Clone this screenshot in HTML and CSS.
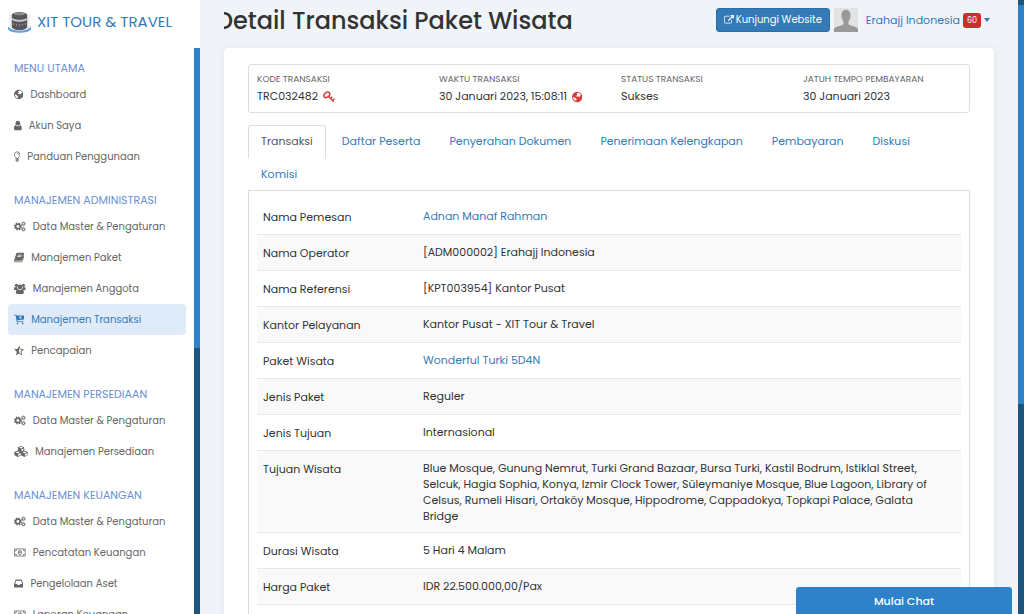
FILE: index.html
```html
<!DOCTYPE html>
<html lang="id">
<head>
<meta charset="utf-8">
<meta name="viewport" content="width=device-width, initial-scale=1">
<title>Detail Transaksi Paket Wisata</title>
<link rel="stylesheet" href="styles.css">
</head>
<body>
<svg class="sprite" aria-hidden="true">
  <symbol id="globe" viewBox="0 0 12 14"><path fill-rule="evenodd" d="M6 1a6 6 0 1 0 0 12A6 6 0 0 0 6 1zM5.500 2.600 7 2l2.300.8L10.600 4.600 9.200 5.600 8.600 7.400 6.800 6.200 5.600 6.800 4.800 5.600 6.200 4.600zM1.300 7 3.600 8 5.400 9.600 4.600 11.800 2.600 10.600 1.400 8.800z"/></symbol>
  <symbol id="user" viewBox="0 0 10 14"><circle cx="5" cy="4" r="3"/><path d="M2 6.500C.6 7 0 9 0 11c0 1.200.8 2 1.900 2h6.200c1.100 0 1.900-.8 1.900-2 0-2-.6-4-2-4.500a4.200 4.200 0 0 1-6 0z"/></symbol>
  <symbol id="bulb" viewBox="0 0 8 14"><path fill="none" stroke="currentColor" d="M2.500 9.500C2.500 7.500.5 7 .5 4.500a3.500 3.500 0 0 1 7 0c0 2.500-2 3-2 5zM4 3c1.200 0 1.700.5 1.700 1.500"/><path d="M2 10h4v1H2zm0 1.500h4v1H2zM3 13h2v1H3z"/></symbol>
  <symbol id="cogs" viewBox="0 0 15 14"><g fill="none" stroke="currentColor"><circle cx="5" cy="7" r="2.900" stroke-width="2"/><circle cx="5" cy="7" r="4.300" stroke-width="1.600" stroke-dasharray="1.900 1.480"/><circle cx="12" cy="3.500" r="1.500" stroke-width="1.200"/><circle cx="12" cy="3.500" r="2.400" stroke-dasharray="1.200 .68"/><circle cx="12" cy="10.500" r="1.500" stroke-width="1.200"/><circle cx="12" cy="10.500" r="2.400" stroke-dasharray="1.200 .68"/></g></symbol>
  <symbol id="book" viewBox="0 0 13 14"><path fill-rule="evenodd" d="M4.300 1h7.500c.9 0 1.300.7 1 1.600l-2.200 7.200c-.3.800-.9 1.200-1.700 1.200H2c-.8 0-1 .3-.8.700.2.300.5.400.9.400h7.200c.6 0 .9-.2 1.100-.7l2-6.500c.6.300.7.700.5 1.300l-2 6c-.2.500-.8.800-1.300.8H2C.9 13 0 12 0 11c0-.6.300-.9.500-1.600L2.900 2c.3-.7.800-1 1.400-1zM5 3.500l-.3 1h5l.3-1zm-.7 2-.3 1h5l.3-1z"/></symbol>
  <symbol id="group" viewBox="0 0 15 14"><circle cx="3" cy="3" r="2"/><circle cx="12" cy="3" r="2"/><circle cx="7.500" cy="5" r="3"/><path d="M1 5C.2 5 0 6.400 0 7.500S.6 9 1.300 9h2C4 8.200 5 8 5 8 4 7 3.800 5.800 4 5.200 3 5.500 2 5.500 1 5zm13 0c.8 0 1 1.400 1 2.500S14.400 9 13.700 9h-2c-.7-.8-1.700-1-1.700-1 1-1 1.200-2.200 1-2.800 1 .3 2 .3 3-.2zM5 8c-2 0-2.500 1.800-2.500 4 0 1.300.8 2 2 2h6c1.200 0 2-.7 2-2 0-2.200-.5-4-2.500-4a4 4 0 0 1-5 0z"/></symbol>
  <symbol id="cart" viewBox="0 0 13 14"><path fill-rule="evenodd" d="M0 1.500C0 1.200.2 1 .5 1h2c.6 0 .7.500.8 1h9.200c.3 0 .5.200.5.500v4c0 .3-.2.500-.5.500L4.300 8l.2 1H12v1H3.700c-.5 0-.6-.4-.4-.8L2.100 2H.5C.2 2 0 1.800 0 1.500zM8.500 2.500h-1v2H6L8 6.500l2-2H8.500z"/><circle cx="4.500" cy="12" r="1.100"/><circle cx="11" cy="12" r="1.100"/></symbol>
  <symbol id="star" viewBox="0 0 13 14"><path fill-rule="evenodd" d="M6.500 1 8.300 4.900l4.400.6-3.200 3 .8 4.400-3.800-2.100-3.800 2.100.8-4.400-3.200-3 4.400-.6zM6.500 3.500v6.200l2.400 1.300-.5-2.900 2-1.900-2.700-.4z"/></symbol>
  <symbol id="cubes" viewBox="0 0 18 14"><path fill-rule="evenodd" d="M9 0l4 1.600v4L17.600 7.600v4L13.300 14 9 11.800 4.700 14 .4 11.600v-4L5 5.600v-4zM9 1 6.400 2.200 9 3.300l2.600-1.100zM9.500 4.300v2.300L12 5.500V3.200zM4.700 7 2 8.100l2.700 1.200 2.700-1.200zm.6 3.200v2.500L8.400 11V8.900zM13.300 7l-2.700 1.100 2.700 1.200L16 8.100zm.6 3.200v2.500l2.900-1.700V8.900z"/></symbol>
  <symbol id="money" viewBox="0 0 15 14"><path fill="none" stroke="currentColor" d="M.5 2.500h14v9H.5zM3 3v1.500L1 5M12 3v1.500l2 .5M3 11V9.500L1 9m11 2V9.500l2-.5"/><path fill-rule="evenodd" d="M7.500 4C5.800 4 5 5.500 5 7s.8 3 2.500 3S10 8.500 10 7s-.8-3-2.500-3zM7 5h1v3h1v1H6V8h1V6.200L6.500 6z"/></symbol>
  <symbol id="inbox" viewBox="0 0 12 14"><path fill-rule="evenodd" d="M2.200 2h7.600L12 7.800V12H0V7.800zM3 3.400 1.500 7.500h2.400l.9 1.500h2.400l.9-1.500h2.400L9 3.400z"/></symbol>
  <symbol id="external" viewBox="0 0 1792 1792"><path d="M1408 928v320q0 119-84.500 203.500t-203.500 84.500h-832q-119 0-203.500-84.500t-84.500-203.500v-832q0-119 84.500-203.500t203.500-84.500h704q14 0 23 9t9 23v64q0 14-9 23t-23 9h-704q-66 0-113 47t-47 113v832q0 66 47 113t113 47h832q66 0 113-47t47-113v-320q0-14 9-23t23-9h64q14 0 23 9t9 23zm384-864v512q0 26-19 45t-45 19-45-19l-176-176-652 652q-10 10-23 10t-23-10l-114-114q-10-10-10-23t10-23l652-652-176-176q-19-19-19-45t19-45 45-19h512q26 0 45 19t19 45z"/></symbol>
  <symbol id="key" viewBox="0 0 14 14"><g fill="none" stroke="currentColor"><ellipse cx="4.500" cy="4.500" rx="3.700" ry="2.700" stroke-width="1.800" transform="rotate(-40 4.500 4.500)"/><path stroke-width="1.800" d="M6.500 6.500 12.500 12.500M8.800 8.800l1.900-1.900M11 11.200l2.200-2.200"/></g></symbol>
</svg>

<div class="app">
  <aside class="sidebar">
    <a class="brand" href="#">
      <svg class="logo" viewBox="0 0 24 24" aria-hidden="true">
        <path fill="#f1f0f1" d="M1 3h22v15H1z"/>
        <path fill="#56555a" d="M4 4c2-4 14-4 16 0v13c-2 4-14 4-16 0z"/>
        <path fill="#8e8c91" d="M6 3c2-2 10-2 12 0-2 2-10 2-12 0z"/>
        <path fill="#c9c7ca" d="M4 7c4 3 12 3 16 0v2c-4 3-12 3-16 0z"/>
        <path fill="none" stroke="#99969b" d="M6 12.500v2m3-1v2m3-2v2m3-2v2m3-3v2"/>
        <path fill="#67a5df" d="M0 16c4 6 20 6 24 0v3c-2 5-22 5-24 0z"/>
      </svg>
      <span>XIT TOUR &amp; TRAVEL</span>
    </a>
    <div class="sidebar-body">
      <nav class="menu">
        <section>
          <h2>MENU UTAMA</h2>
          <a href="#"><svg viewBox="0 0 12 14"><use href="#globe"/></svg>Dashboard</a>
          <a href="#"><svg viewBox="0 0 10 14"><use href="#user"/></svg>Akun Saya</a>
          <a href="#"><svg viewBox="0 0 8 14"><use href="#bulb"/></svg>Panduan Penggunaan</a>
        </section>
        <section>
          <h2>MANAJEMEN ADMINISTRASI</h2>
          <a href="#"><svg viewBox="0 0 15 14"><use href="#cogs"/></svg>Data Master &amp; Pengaturan</a>
          <a href="#"><svg viewBox="0 0 13 14"><use href="#book"/></svg>Manajemen Paket</a>
          <a href="#"><svg viewBox="0 0 15 14"><use href="#group"/></svg>Manajemen Anggota</a>
          <a class="active" href="#"><svg viewBox="0 0 13 14"><use href="#cart"/></svg>Manajemen Transaksi</a>
          <a href="#"><svg viewBox="0 0 13 14"><use href="#star"/></svg>Pencapaian</a>
        </section>
        <section>
          <h2>MANAJEMEN PERSEDIAAN</h2>
          <a href="#"><svg viewBox="0 0 15 14"><use href="#cogs"/></svg>Data Master &amp; Pengaturan</a>
          <a href="#"><svg viewBox="0 0 18 14"><use href="#cubes"/></svg>Manajemen Persediaan</a>
        </section>
        <section>
          <h2>MANAJEMEN KEUANGAN</h2>
          <a href="#"><svg viewBox="0 0 15 14"><use href="#cogs"/></svg>Data Master &amp; Pengaturan</a>
          <a href="#"><svg viewBox="0 0 15 14"><use href="#money"/></svg>Pencatatan Keuangan</a>
          <a href="#"><svg viewBox="0 0 12 14"><use href="#inbox"/></svg>Pengelolaan Aset</a>
          <a href="#"><svg viewBox="0 0 15 14"><use href="#money"/></svg>Laporan Keuangan</a>
        </section>
      </nav>
      <div class="track"><div class="thumb menu-thumb"></div></div>
    </div>
  </aside>

  <main class="main">
    <header class="topbar">
      <h1>Detail Transaksi Paket Wisata</h1>
      <div class="account">
        <a class="visit" href="#"><svg viewBox="0 0 1792 1792"><use href="#external"/></svg>Kunjungi Website</a>
        <svg class="avatar" viewBox="0 0 24 24" role="img" aria-label="Foto profil">
          <path fill="#e2e2e2" d="M0 0h24v24H0z"/>
          <path fill="#999" d="M7.500 7c0-7 9-7 9 0 0 3-.7 5-2 6.500V16c1 2 8.500 2 9.500 5v3H0v-3c1-3 8.500-3 9.500-5v-2.500C8.200 12 7.500 10 7.500 7z"/>
        </svg>
        <button class="profile" type="button">Erahajj Indonesia <span class="badge">60</span><span class="caret"></span></button>
      </div>
    </header>

    <div class="card">
      <dl class="summary">
        <div><dt>KODE TRANSAKSI</dt><dd>TRC032482 <svg viewBox="0 0 14 14"><use href="#key"/></svg></dd></div>
        <div><dt>WAKTU TRANSAKSI</dt><dd>30 Januari 2023, 15:08:11 <svg viewBox="0 0 12 14"><use href="#globe"/></svg></dd></div>
        <div><dt>STATUS TRANSAKSI</dt><dd>Sukses</dd></div>
        <div><dt>JATUH TEMPO PEMBAYARAN</dt><dd>30 Januari 2023</dd></div>
      </dl>

      <nav class="tabs">
        <a class="active" href="#">Transaksi</a>
        <a href="#">Daftar Peserta</a>
        <a href="#">Penyerahan Dokumen</a>
        <a href="#">Penerimaan Kelengkapan</a>
        <a href="#">Pembayaran</a>
        <a href="#">Diskusi</a>
        <a href="#">Komisi</a>
      </nav>

      <div class="panel">
        <table class="details">
          <tbody>
            <tr><th scope="row">Nama Pemesan</th><td><a href="#">Adnan Manaf Rahman</a></td></tr>
            <tr><th scope="row">Nama Operator</th><td>[ADM000002] Erahajj Indonesia</td></tr>
            <tr><th scope="row">Nama Referensi</th><td>[KPT003954] Kantor Pusat</td></tr>
            <tr><th scope="row">Kantor Pelayanan</th><td>Kantor Pusat - XIT Tour &amp; Travel</td></tr>
            <tr><th scope="row">Paket Wisata</th><td><a href="#">Wonderful Turki 5D4N</a></td></tr>
            <tr><th scope="row">Jenis Paket</th><td>Reguler</td></tr>
            <tr><th scope="row">Jenis Tujuan</th><td>Internasional</td></tr>
            <tr><th scope="row">Tujuan Wisata</th><td>Blue Mosque, Gunung Nemrut, Turki Grand Bazaar, Bursa Turki, Kastil Bodrum, Istiklal Street,<br>Selcuk, Hagia Sophia, Konya, Izmir Clock Tower, Süleymaniye Mosque, Blue Lagoon, Library of<br>Celsus, Rumeli Hisari, Ortaköy Mosque, Hippodrome, Cappadokya, Topkapi Palace, Galata<br>Bridge</td></tr>
            <tr><th scope="row">Durasi Wisata</th><td>5 Hari 4 Malam</td></tr>
            <tr><th scope="row">Harga Paket</th><td>IDR 22.500.000,00/Pax</td></tr>
            <tr><th scope="row">&nbsp;</th><td></td></tr>
          </tbody>
        </table>
      </div>
    </div>
  </main>
  <div class="track page-track"><div class="thumb page-thumb"></div></div>
</div>
<button class="chat" type="button">Mulai Chat</button>
</body>
</html>
```

FILE: styles.css
```css
* { box-sizing: border-box; }

body {
  margin: 0;
  height: 100vh;
  overflow: hidden;
  background: #f0f4f8;
  color: #333;
  font-family: Poppins, Inter, sans-serif;
  font-size: 11px;
  line-height: 16px;
}

a { color: #337ab7; text-decoration: none; }
button { font: inherit; }
svg { fill: currentColor; }
.sprite { position: absolute; width: 0; height: 0; }

.app { display: flex; height: 100vh; }

.sidebar {
  display: flex;
  flex-direction: column;
  flex: 0 0 200px;
  background: #fff;
}
.brand {
  display: flex;
  align-items: center;
  gap: 6px;
  flex: 0 0 48px;
  padding: 0 8px 4px;
  font-size: 15px;
  white-space: nowrap;
}
.logo { width: 23px; height: 23px; }
.sidebar-body { display: flex; flex: 1; min-height: 0; }
.menu {
  display: flex;
  flex-direction: column;
  gap: 17px;
  flex: 1;
  padding: 9px 8px 0;
  overflow: hidden;
}
.menu section { flex: none; }
.menu h2 {
  margin: 0;
  padding-left: 6px;
  color: #6a8fd4;
  font-size: 11px;
  font-weight: 400;
  line-height: 22px;
  white-space: nowrap;
}
.menu a {
  display: flex;
  align-items: center;
  gap: 7px;
  height: 31px;
  padding-left: 6px;
  border-radius: 4px;
  color: #666;
  font-size: 10px;
  white-space: nowrap;
}
.menu a svg { height: 11px; }
.menu a.active { background: #dfebf9; color: #337ab7; }

.track { flex: 0 0 6px; background: #1c567f; }
.thumb { background: #2d82ca; }
.menu-thumb { height: 53%; }
.page-track { padding-top: 5px; }
.page-thumb { height: 65.5%; }

.main { flex: 1; min-width: 0; padding: 0 24px; overflow: hidden; }
.topbar {
  display: flex;
  align-items: center;
  justify-content: space-between;
  height: 48px;
  padding-bottom: 8px;
}
h1 {
  margin: 0;
  overflow: hidden;
  font-size: 24px;
  font-weight: 500;
  line-height: 40px;
  padding-top: 2px;
  text-indent: -8px;
  white-space: nowrap;
}
.account { display: flex; align-items: center; gap: 4px; }
.visit {
  display: flex;
  align-items: center;
  gap: 2px;
  height: 24px;
  padding: 0 7px;
  border: 1px solid #2e6da4;
  border-radius: 3px;
  background: #337ab7;
  color: #fff;
  font-size: 10px;
  white-space: nowrap;
}
.visit svg { width: 10px; height: 10px; }
.avatar { width: 24px; height: 24px; }
.profile {
  display: flex;
  align-items: center;
  gap: 3px;
  padding: 0 4px;
  border: 0;
  background: none;
  color: #337ab7;
  white-space: nowrap;
}
.badge {
  padding: 0 4px;
  border-radius: 3px;
  background: #c9302c;
  color: #fff;
  font-size: 8px;
  line-height: 15px;
}
.caret { border: 3px solid transparent; border-top: 4px solid; border-bottom: 0; }

.card {
  padding: 16px 24px;
  border-radius: 4px;
  background: #fff;
  box-shadow: 0 0 8px #dde5ec;
}
.summary {
  display: grid;
  grid-template-columns: 1fr 1fr 1fr 166px;
  margin: 0 0 12px;
  padding: 5px 0 7px 8px;
  border: 1px solid #ddd;
  border-radius: 3px;
}
.summary dt { color: #666; font-size: 9px; line-height: 18px; white-space: nowrap; }
.summary dd {
  display: flex;
  align-items: center;
  gap: 5px;
  margin: 0;
  line-height: 17px;
  white-space: nowrap;
}
.summary svg { height: 12px; color: #d43f3a; }

.tabs { display: flex; flex-wrap: wrap; column-gap: 3px; }
.tabs a {
  height: 33px;
  padding: 7px 12px;
  border: 1px solid transparent;
  border-bottom: 0;
  white-space: nowrap;
}
.tabs a.active {
  border-color: #ddd;
  border-radius: 3px 3px 0 0;
  color: #555;
}

.panel { margin-top: -1px; padding: 7px 8px 0; border: 1px solid #ddd; }
.details { width: 100%; border-collapse: collapse; }
.details th, .details td {
  height: 36px;
  padding: 9px 6px 8px;
  border-top: 1px solid #e8e8e8;
  text-align: left;
  vertical-align: top;
  font-weight: 400;
}
.details td { white-space: nowrap; }
.details th { width: 160px; padding-top: 10px; }
.details tr:first-child > * { border-top-color: transparent; }
.details tr:nth-child(even) { background: #f9f9f9; }

.chat {
  position: fixed;
  right: 12px;
  bottom: 0;
  width: 216px;
  height: 27px;
  border: 0;
  border-radius: 3px 3px 0 0;
  background: #2d82ca;
  color: #fff;
  font-weight: 500;
}
```
